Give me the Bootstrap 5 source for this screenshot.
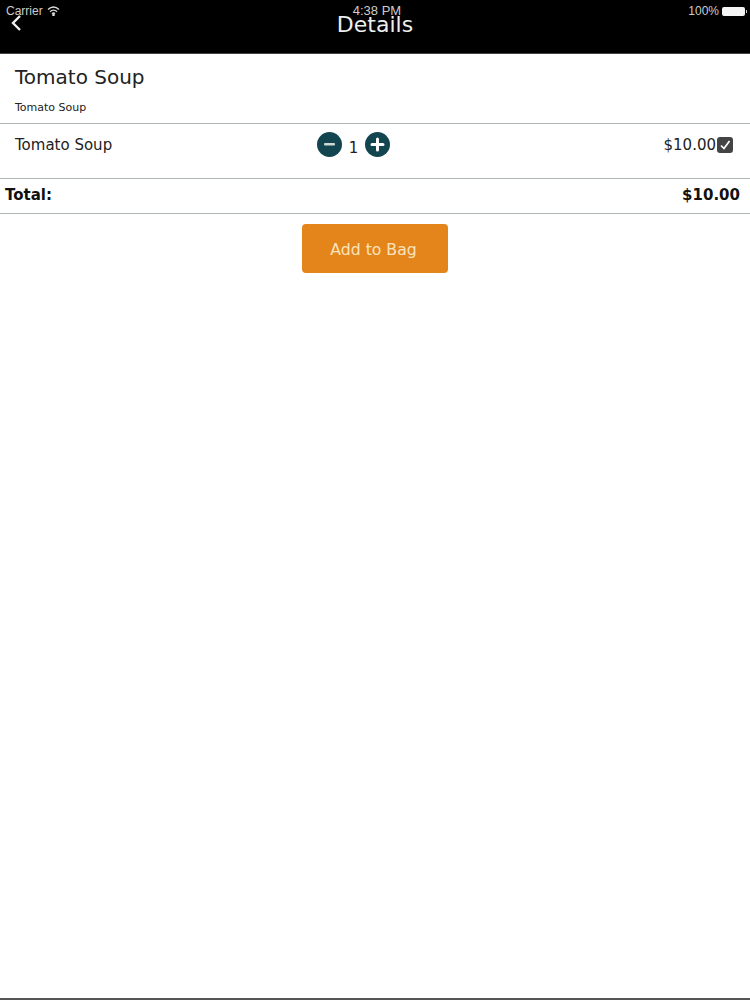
<!DOCTYPE html>
<html lang="en">
<head>
<meta charset="utf-8">
<title>Details</title>
<link rel="stylesheet" href="https://cdn.jsdelivr.net/npm/bootstrap@5.3.0/dist/css/bootstrap.min.css">
<style>
html, body { background: #fff; }
body { font-family: "DejaVu Sans", sans-serif; color: #222; height: 1000px; overflow: hidden; }
.app-shell { height: 1000px; border-bottom: 2px solid #555; }
.app-head { height: 54px; background: #000; color: #eee; border-bottom: 1px solid #444; }
.status-strip { position: absolute; top: 4px; left: 0; right: 0; height: 14px; padding: 0 5px 0 6px; font: 12px/14px "Liberation Sans", sans-serif; color: #ccc; }
.status-time { position: absolute; left: 4px; right: 0; top: 0; text-align: center; font-size: 13px; }
.batt { width: 23px; height: 9px; background: #f4f4f4; border-radius: 2px; position: relative; margin-left: 3px; }
.batt::after { content: ""; position: absolute; right: -2px; top: 3px; width: 1px; height: 3px; background: #ccc; }
.back-chevron { position: absolute; left: 10px; top: 14px; }
.head-title { font-size: 22px; line-height: 24px; padding-top: 13px; text-align: center; color: #eee; }
.intro-block { height: 70px; padding: 11px 15px 0; border-bottom: 1px solid #aeb4b4; }
.intro-name { font-size: 20px; line-height: 24px; margin: 0; font-weight: 400; }
.intro-sub { font-size: 11px; line-height: 14px; margin: 12px 0 0; color: #222; }
.item-row { height: 55px; padding: 9px 17px 0 15px; border-bottom: 1px solid #aeb4b4; font-size: 15px; line-height: 24px; }
.qty-wrap { position: absolute; left: 317px; top: 8px; }
.qty-num { width: 23px; text-align: center; font-size: 15px; line-height: 24px; padding-top: 4px; }
.tick-box { width: 16px; height: 16px; background: #444; border-radius: 3px; margin-left: 1px; }
.total-row { height: 35px; padding: 1px 10px 0 5px; border-bottom: 1px solid #aeb4b4; font-size: 15px; font-weight: 700; line-height: 30px; color: #111; }
.bag-btn { width: 146px; height: 49px; background: #e3851a; border: 0; border-radius: 4px; color: #fbe3bd; font-size: 15.7px; margin-top: 10px; padding: 3px 3px 0 0; }
.bag-btn:hover, .bag-btn:active { background: #e3851a !important; color: #fbe3bd !important; }
</style>
</head>
<body class="m-0">
<div class="app-shell d-flex flex-column">
  <header class="app-head position-relative">
    <div class="status-strip d-flex align-items-center justify-content-between">
      <div class="d-flex align-items-center gap-1">
        <span>Carrier</span>
        <svg width="13" height="10" viewBox="0 0 13 10" fill="none" stroke="#ddd" stroke-width="1.4" aria-hidden="true"><path d="M1 3.6C4.4.5 8.6.5 12 3.6"/><path d="M3 5.7c2.2-2 4.8-2 7 0"/><path d="M5 7.7c1-.9 2-.9 3 0"/><circle cx="6.5" cy="8.9" r=".6" fill="#ddd"/></svg>
      </div>
      <div class="status-time">4:38 PM</div>
      <div class="d-flex align-items-center"><span>100%</span><span class="batt"></span></div>
    </div>
    <svg class="back-chevron" width="12" height="18" viewBox="0 0 12 18" fill="none" stroke="#eee" stroke-width="2.4" aria-hidden="true"><path d="M10 2 3 9l7 7"/></svg>
    <div class="head-title">Details</div>
  </header>
  <section class="intro-block">
    <h1 class="intro-name">Tomato Soup</h1>
    <p class="intro-sub">Tomato Soup</p>
  </section>
  <section class="item-row position-relative d-flex justify-content-between">
    <div>Tomato Soup</div>
    <div class="qty-wrap d-flex align-items-start">
      <svg width="25" height="25" viewBox="0 0 25 25" aria-hidden="true"><circle cx="12.5" cy="12.5" r="12.5" fill="#12454f"/><rect x="7" y="11" width="11" height="2.6" rx="1" fill="#cfd8d8"/></svg>
      <span class="qty-num">1</span>
      <svg width="25" height="25" viewBox="0 0 25 25" aria-hidden="true"><circle cx="12.5" cy="12.5" r="12.5" fill="#12454f"/><path d="M12.5 7v11M7 12.5h11" stroke="#fff" stroke-width="3" stroke-linecap="round"/></svg>
    </div>
    <div class="d-flex align-items-center align-self-start">
      <span>$10.00</span>
      <span class="tick-box d-flex align-items-center justify-content-center"><svg width="12" height="12" viewBox="0 0 12 12" fill="none" stroke="#fff" stroke-width="1.7" aria-hidden="true"><path d="M2 6.5 5 9.5 10.5 2"/></svg></span>
    </div>
  </section>
  <section class="total-row d-flex justify-content-between">
    <div>Total:</div>
    <div>$10.00</div>
  </section>
  <div class="text-center">
    <button type="button" class="btn bag-btn">Add to Bag</button>
  </div>
</div>
<script src="https://cdn.jsdelivr.net/npm/bootstrap@5.3.0/dist/js/bootstrap.bundle.min.js"></script>
</body>
</html>
